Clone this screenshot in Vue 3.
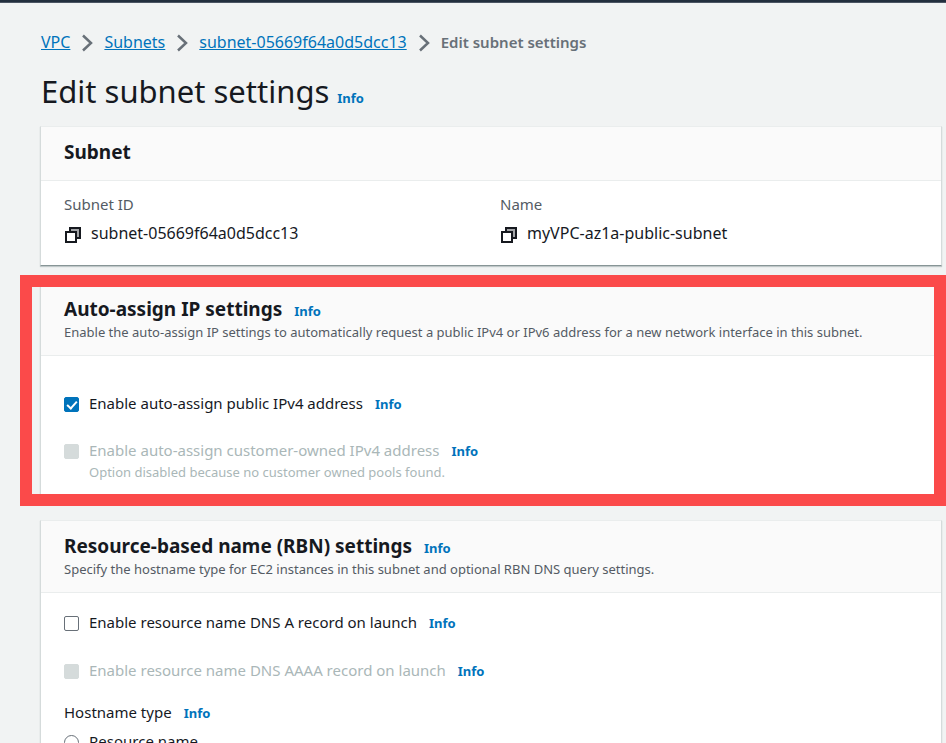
<script setup>
import { ref } from 'vue'

const crumbs = ['VPC', 'Subnets', 'subnet-05669f64a0d5dcc13']
const details = [
  { label: 'Subnet ID', value: 'subnet-05669f64a0d5dcc13' },
  { label: 'Name', value: 'myVPC-az1a-public-subnet' },
]
const publicIpv4 = ref(true)
const customerIpv4 = ref(false)
const dnsA = ref(false)
const dnsAaaa = ref(false)
const hostnameType = ref('')
</script>

<template>
  <div class="page">
    <div class="topbar"></div>
    <main class="content">
      <nav class="crumbs" aria-label="Breadcrumb">
        <template v-for="crumb in crumbs" :key="crumb">
          <a href="#">{{ crumb }}</a>
          <svg class="chevron" viewBox="0 0 12 18" aria-hidden="true">
            <path d="M2 1.500 L10 9 L2 16.500" />
          </svg>
        </template>
        <span class="current">Edit subnet settings</span>
      </nav>

      <div class="title">
        <h1>Edit subnet settings</h1>
        <a class="info" href="#">Info</a>
      </div>

      <div class="cards">
        <section class="card">
          <header class="card-head plain">
            <h2>Subnet</h2>
          </header>
          <dl class="details">
            <div v-for="item in details" :key="item.label">
              <dt>{{ item.label }}</dt>
              <dd>
                <button type="button" class="copy" :aria-label="item.label">
                  <svg viewBox="0 0 17 17" aria-hidden="true">
                    <path class="back" d="M6 2H16V12H12V6H6Z" />
                    <path class="line" d="M6 6V2H16V12H12" />
                    <rect class="front" x="2" y="6" width="10" height="10" />
                  </svg>
                </button>
                <span>{{ item.value }}</span>
              </dd>
            </div>
          </dl>
        </section>

        <section class="card highlighted">
          <header class="card-head">
            <div class="heading">
              <h2>Auto-assign IP settings</h2>
              <a class="info" href="#">Info</a>
            </div>
            <p>Enable the auto-assign IP settings to automatically request a public IPv4 or IPv6 address for a new network interface in this subnet.</p>
          </header>
          <div class="card-body spacious">
            <div class="option">
              <input id="public-ipv4" v-model="publicIpv4" type="checkbox" />
              <label for="public-ipv4">Enable auto-assign public IPv4 address</label>
              <a class="info" href="#">Info</a>
            </div>
            <div class="option">
              <input id="customer-ipv4" v-model="customerIpv4" type="checkbox" disabled aria-describedby="customer-note" />
              <label for="customer-ipv4">Enable auto-assign customer-owned IPv4 address</label>
              <a class="info" href="#">Info</a>
              <p id="customer-note" class="note">Option disabled because no customer owned pools found.</p>
            </div>
          </div>
        </section>

        <section class="card">
          <header class="card-head">
            <div class="heading">
              <h2>Resource-based name (RBN) settings</h2>
              <a class="info" href="#">Info</a>
            </div>
            <p>Specify the hostname type for EC2 instances in this subnet and optional RBN DNS query settings.</p>
          </header>
          <div class="card-body">
            <div class="option">
              <input id="dns-a" v-model="dnsA" type="checkbox" />
              <label for="dns-a">Enable resource name DNS A record on launch</label>
              <a class="info" href="#">Info</a>
            </div>
            <div class="option">
              <input id="dns-aaaa" v-model="dnsAaaa" type="checkbox" disabled />
              <label for="dns-aaaa">Enable resource name DNS AAAA record on launch</label>
              <a class="info" href="#">Info</a>
            </div>
            <div class="group" role="radiogroup" aria-labelledby="hostname-type">
              <div class="group-label">
                <span id="hostname-type">Hostname type</span>
                <a class="info" href="#">Info</a>
              </div>
              <div class="option">
                <input id="resource-name" v-model="hostnameType" type="radio" name="hostname" value="resource" />
                <label for="resource-name">Resource name</label>
              </div>
            </div>
          </div>
        </section>
      </div>
    </main>
  </div>
</template>

<style>
body {
  background: #f1f3f3;
}
html,
body {
  height: 100%;
  overflow: hidden;
}
</style>

<style scoped>
.page {
  height: 100vh;
  overflow: hidden;
  background: #f1f3f3;
  color: #16191f;
  font-family: "Noto Sans", "Open Sans", sans-serif;
  font-size: 15px;
  line-height: 22px;
}
.topbar {
  height: 3px;
  box-sizing: border-box;
  background: #232f3e;
  border-bottom: 1px solid #4b5563;
}
.content {
  padding: 28px 4px 0 40px;
}
h1,
h2,
p,
dl,
dd {
  margin: 0;
}
a {
  color: #0073bb;
}
.crumbs {
  display: flex;
  align-items: center;
  padding-left: 1px;
}
.crumbs a {
  font-size: 16px;
}
.chevron {
  width: 12px;
  height: 18px;
  margin: 2px 11px 0;
  fill: none;
  stroke: #687078;
  stroke-width: 2.5;
}
.current {
  color: #687078;
  font-weight: 600;
}
.title {
  display: flex;
  align-items: baseline;
  gap: 8px;
  padding: 18px 0 15px 1px;
}
h1 {
  font-size: 31px;
  line-height: 40px;
  font-weight: 400;
}
.info {
  font-size: 13px;
  line-height: 20px;
  font-weight: 700;
  text-decoration: none;
}
.cards {
  display: flex;
  flex-direction: column;
  gap: 17px;
}
.card {
  position: relative;
  background: #fff;
  border: 1px solid #d5dbdb;
  border-top-color: #eaeded;
  border-bottom-color: #879596;
  box-shadow: 0 1px 1px rgba(0, 28, 36, 0.2);
}
.card-head {
  padding: 13px 23px;
  background: #fafafa;
  border-bottom: 1px solid #eaeded;
}
.card-head.plain {
  padding-bottom: 16px;
}
.heading {
  display: flex;
  align-items: baseline;
  gap: 12px;
}
h2 {
  font-size: 19px;
  line-height: 24px;
  font-weight: 700;
}
.card-head p {
  margin-top: 1px;
  font-size: 13px;
  line-height: 20px;
  color: #545b64;
}
.details {
  display: grid;
  grid-template-columns: 1fr 1fr;
  gap: 18px;
  padding: 12px 23px 21px;
}
dt {
  color: #545b64;
}
dd {
  display: flex;
  align-items: center;
  gap: 10px;
  padding-top: 7px;
  font-size: 16px;
}
.copy {
  display: flex;
  padding: 3px 0 0;
  border: 0;
  background: none;
}
.copy svg {
  width: 17px;
  height: 17px;
}
.copy .back {
  fill: #a3a5a8;
}
.copy .line {
  fill: none;
  stroke: #16191f;
  stroke-width: 2;
}
.copy .front {
  fill: #fff;
  stroke: #16191f;
  stroke-width: 2;
}
.card-body {
  display: flex;
  flex-direction: column;
  gap: 26px;
  padding: 18px 23px;
}
.card-body.spacious {
  gap: 25px;
  padding: 36px 23px 19px;
}
.option {
  display: grid;
  grid-template-columns: 15px auto 1fr;
  align-items: baseline;
  column-gap: 10px;
}
.option .info {
  margin-left: 2px;
}
.note {
  grid-column: 2 / -1;
  font-size: 13px;
  line-height: 22px;
  color: #aab7b8;
}
input {
  appearance: none;
  align-self: start;
  width: 15px;
  height: 15px;
  margin: 5px 0 0;
  border: 1px solid #687078;
  border-radius: 2px;
  background: #fff;
}
input[type="radio"] {
  border-radius: 50%;
}
input:checked {
  background: #0073bb;
  border-color: #0073bb;
  display: grid;
  place-items: center;
}
input:checked::after {
  content: "";
  width: 4px;
  height: 8px;
  margin-bottom: 2px;
  border: solid #fff;
  border-width: 0 2px 2px 0;
  transform: rotate(42deg);
}
input:disabled {
  background: #d5dbdb;
  border-color: #d5dbdb;
}
input:disabled + label {
  color: #aab7b8;
}
.group {
  display: flex;
  flex-direction: column;
  gap: 7px;
  margin-top: -6px;
}
.group-label {
  display: flex;
  align-items: baseline;
  gap: 12px;
}
/* Callout frame drawn over the highlighted section */
.highlighted::after {
  content: "";
  position: absolute;
  inset: -9px -5px -4px -21px;
  border: 12px solid #fb4a4a;
  pointer-events: none;
}
</style>
